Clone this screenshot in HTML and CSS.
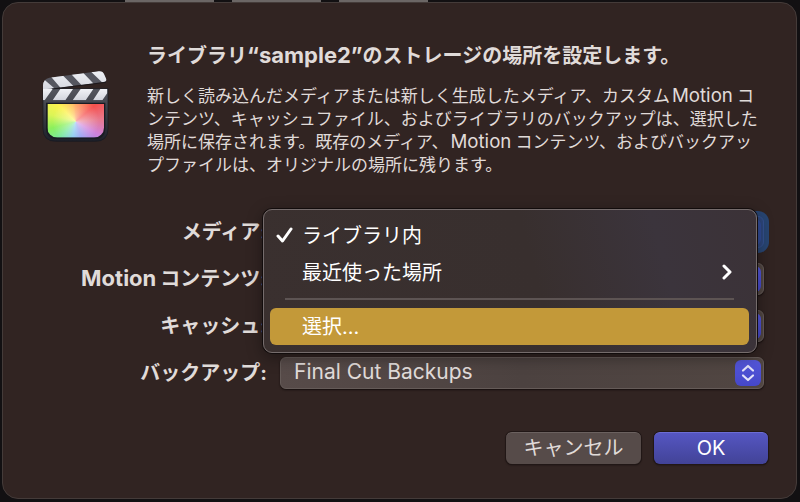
FILE: index.html
```html
<!DOCTYPE html>
<html lang="ja">
<head>
<meta charset="utf-8">
<meta name="viewport" content="width=device-width, initial-scale=1">
<title>ストレージの場所</title>
<link rel="stylesheet" href="styles.css">
</head>
<body>
<div class="backdrop" aria-hidden="true"><span></span><span></span><span></span></div>
<main class="dialog">
  <header class="intro">
    <svg class="app-icon" viewBox="36 33 204 213" aria-hidden="true">
      <defs>
        <linearGradient id="body" x1="0" y1="0" x2="0" y2="1">
          <stop offset="0" stop-color="#55565e"/><stop offset="1" stop-color="#1d2029"/>
        </linearGradient>
        <linearGradient id="stripe" x1="0" y1="0" x2="0" y2="1">
          <stop offset="0" stop-color="#f1f2f6"/><stop offset="1" stop-color="#d2d4dc"/>
        </linearGradient>
        <clipPath id="arm"><path d="M58 53 L206 34 Q219 33 223 44 L229 58 Q230 65 222 66 L62 86 L39 88 V76 Q40 57 58 53Z"/></clipPath>
        <clipPath id="bar"><path d="M39 87H232V121H39Z"/></clipPath>
      </defs>
      <path d="M39 86H234V206Q234 244 196 244H78Q39 244 39 206Z" fill="url(#body)" stroke="#171820" stroke-width="2"/>
      <g clip-path="url(#arm)">
        <path d="M36 33H240V90H36Z" fill="#55565f"/>
        <path d="M39 61L45 61L73 85L39 92Z M63 50L98 46L130 78L92 84Z M124 43L160 39L191 71L155 76Z M184 36L218 31L240 62L216 67Z" fill="url(#stripe)"/>
      </g>
      <path d="M66 87L228 67" stroke="#121218" stroke-width="2"/>
      <g clip-path="url(#bar)" fill="url(#stripe)">
        <path d="M39 87H68L44 121H39Z M91 87H129L106 121H68Z M152 87H190L167 121H128Z M211 87H232V99L217 121H189Z"/>
      </g>
      <path d="M48 128H226V203Q226 237 193 237H82Q48 237 48 203Z" fill="#191b23"/>
      <foreignObject x="52" y="132" width="170" height="101"><div class="color-wheel"></div></foreignObject>
    </svg>
    <div class="message">
      <h1>ライブラリ<span class="latin quoted">“sample2”</span>のストレージの場所を設定します。</h1>
      <p>新しく読み込んだメディアまたは新しく生成したメディア、カスタム<span class="latin">Motion</span>コンテンツ、キャッシュファイル、およびライブラリのバックアップは、選択した場所に保存されます。既存のメディア、<span class="latin">Motion</span>コンテンツ、およびバックアップファイルは、オリジナルの場所に残ります。</p>
    </div>
  </header>

  <form class="settings">
    <div class="row">
      <label for="media">メディア:</label>
      <div class="popup focused">
        <select id="media"><option>ライブラリ内</option></select>
        <svg class="arrows" viewBox="0 0 26 26" aria-hidden="true"><path d="M8 10.500L13 6L18 10.500M8 15.500L13 20L18 15.500"/></svg>
      </div>
      <div class="menu" role="menu">
        <button type="button" role="menuitem" class="item">
          <svg class="check" viewBox="0 0 18 18" aria-hidden="true"><path d="M2 10L6.500 15L15 3"/></svg>
          <span>ライブラリ内</span>
        </button>
        <button type="button" role="menuitem" class="item">
          <span>最近使った場所</span>
          <svg class="chevron" viewBox="0 0 12 16" aria-hidden="true"><path d="M3 2L9 8L3 14"/></svg>
        </button>
        <hr>
        <button type="button" role="menuitem" class="item selected"><span>選択...</span></button>
      </div>
    </div>
    <div class="row">
      <label for="motion"><span class="latin">Motion</span>コンテンツ:</label>
      <div class="popup">
        <select id="motion"><option>ライブラリ内</option></select>
        <svg class="arrows" viewBox="0 0 26 26" aria-hidden="true"><path d="M8 10.500L13 6L18 10.500M8 15.500L13 20L18 15.500"/></svg>
      </div>
    </div>
    <div class="row">
      <label for="cache">キャッシュ:</label>
      <div class="popup">
        <select id="cache"><option>ライブラリ内</option></select>
        <svg class="arrows" viewBox="0 0 26 26" aria-hidden="true"><path d="M8 10.500L13 6L18 10.500M8 15.500L13 20L18 15.500"/></svg>
      </div>
    </div>
    <div class="row">
      <label for="backup">バックアップ:</label>
      <div class="popup">
        <select id="backup"><option>Final Cut Backups</option></select>
        <svg class="arrows" viewBox="0 0 26 26" aria-hidden="true"><path d="M8 10.500L13 6L18 10.500M8 15.500L13 20L18 15.500"/></svg>
      </div>
    </div>
  </form>

  <footer class="actions">
    <button type="button" class="button cancel">キャンセル</button>
    <button type="button" class="button ok">OK</button>
  </footer>
</main>
</body>
</html>
```
FILE: styles.css
```css
* { box-sizing: border-box; }

body {
  margin: 0;
  padding: 2px 3px 3px 2px;
  min-height: 100vh;
  display: flex;
  background: #121012;
  color: #e0dbd9;
  font-family: Inter, "Noto Sans CJK JP", sans-serif;
}

button, select { font: inherit; color: inherit; }

/* Window controls peeking out above the sheet */
.backdrop {
  position: absolute;
  top: 0;
  left: 125px;
  display: flex;
  gap: 18px;
}
.backdrop span { width: 89px; height: 2px; background: #6b6665; }

.dialog {
  position: relative;
  flex: 1;
  padding: 39px 28px 32px 39px;
  background: #312422;
  border: 1px solid #443b39;
  border-radius: 16px;
}

.intro { display: flex; gap: 37px; }
.app-icon { flex: none; width: 68px; height: 71px; margin-top: 29px; }
.color-wheel {
  height: 101px;
  border-radius: 0 0 30px 30px;
  background:
    radial-gradient(circle at 50% 52%, #fff8, #fff0 70px),
    conic-gradient(from 0deg at 50% 52%, #ff9b4e, #f5514f 50deg, #e87a8e 85deg, #cf82dc 120deg, #8f96f0 160deg, #7cc4ee 190deg, #79e8a0 225deg, #8cf05c 255deg, #dcf556 285deg, #fdf14e 315deg, #ffb94c 350deg, #ff9b4e);
}

.message { flex: 1; max-width: 612px; }
h1 { margin: 0; font-size: 20px; line-height: 28px; font-weight: 700; }
p { margin: 15px 0 0; font-size: 17px; line-height: 23px; }

/* Latin words are set slightly larger than the surrounding kana */
.latin { margin: 0 4px 0 2px; font-size: 110%; line-height: 1; }
.quoted { margin: 0; }

.settings {
  display: grid;
  gap: 15px;
  margin: 39px 4px 0 0;
  font-size: 20px;
}
.row {
  position: relative;
  display: grid;
  grid-template-columns: 225px 1fr;
  column-gap: 13px;
  align-items: center;
}
label { text-align: right; font-weight: 700; line-height: 28px; padding-bottom: 1px; white-space: nowrap; }

.popup { display: grid; align-items: center; border-radius: 6px; }
.popup > * { grid-area: 1 / 1; }
select {
  appearance: none;
  width: 100%;
  height: 32px;
  padding: 0 36px 4px 13px;
  border: 1px solid #655b58;
  border-radius: 6px;
  outline: none;
  background: linear-gradient(90deg, #574b49, #4c4240 50%, #514642);
  box-shadow: 0 1px 2px #140d0c;
  font-size: 21px;
}
.focused select { border-color: #34518e; background: #2d467b; box-shadow: 0 0 0 5px #284572; }
.arrows {
  justify-self: end;
  width: 26px;
  height: 26px;
  margin-right: 3px;
  border-radius: 6px;
  background: linear-gradient(#5558dc, #4547c8);
  fill: none;
  stroke: #e3e2f8;
  stroke-width: 2.2;
  stroke-linecap: round;
  stroke-linejoin: round;
  pointer-events: none;
}
.focused .arrows { background: #314b95; }

.menu {
  position: absolute;
  z-index: 1;
  top: -7px;
  left: 221px;
  right: 7px;
  padding: 7px 7px 7px 6px;
  border: 1px solid #756c6c;
  border-radius: 9px;
  background: linear-gradient(75deg, #3a302f, #382f2e 55%, #3b343c 80%, #3b3237);
  box-shadow: 0 0 0 1px #120c0c, 0 4px 16px #0006;
  color: #fff;
}
.item {
  display: flex;
  align-items: center;
  width: 100%;
  height: 37px;
  padding: 0 16px 2px 32px;
  border: 0;
  border-radius: 6px;
  background: none;
  text-align: left;
}
.item.selected { background: #c39939; }
.item svg { fill: none; stroke: #fff; stroke-width: 3; stroke-linecap: round; stroke-linejoin: round; }
.check { width: 18px; height: 18px; margin: 0 8px 0 -26px; }
.chevron { width: 12px; height: 16px; margin-left: auto; }
hr { height: 2px; margin: 7px 15px 8px; border: 0; background: #5d5453; }

.actions { display: flex; justify-content: flex-end; gap: 13px; margin-top: 43px; }
.button {
  height: 32px;
  padding: 0 0 2px;
  border: 0;
  border-top: 1px solid #6b615f;
  border-radius: 6px;
  box-shadow: 0 0 0 1px #211716, 0 1px 2px #140d0c;
  font-size: 20px;
  line-height: 28px;
}
.cancel { width: 135px; background: #564b49; }
.ok { width: 114px; color: #fff; border-top-color: #6c6dd4; background: linear-gradient(#5556c2, #424397); }
```
